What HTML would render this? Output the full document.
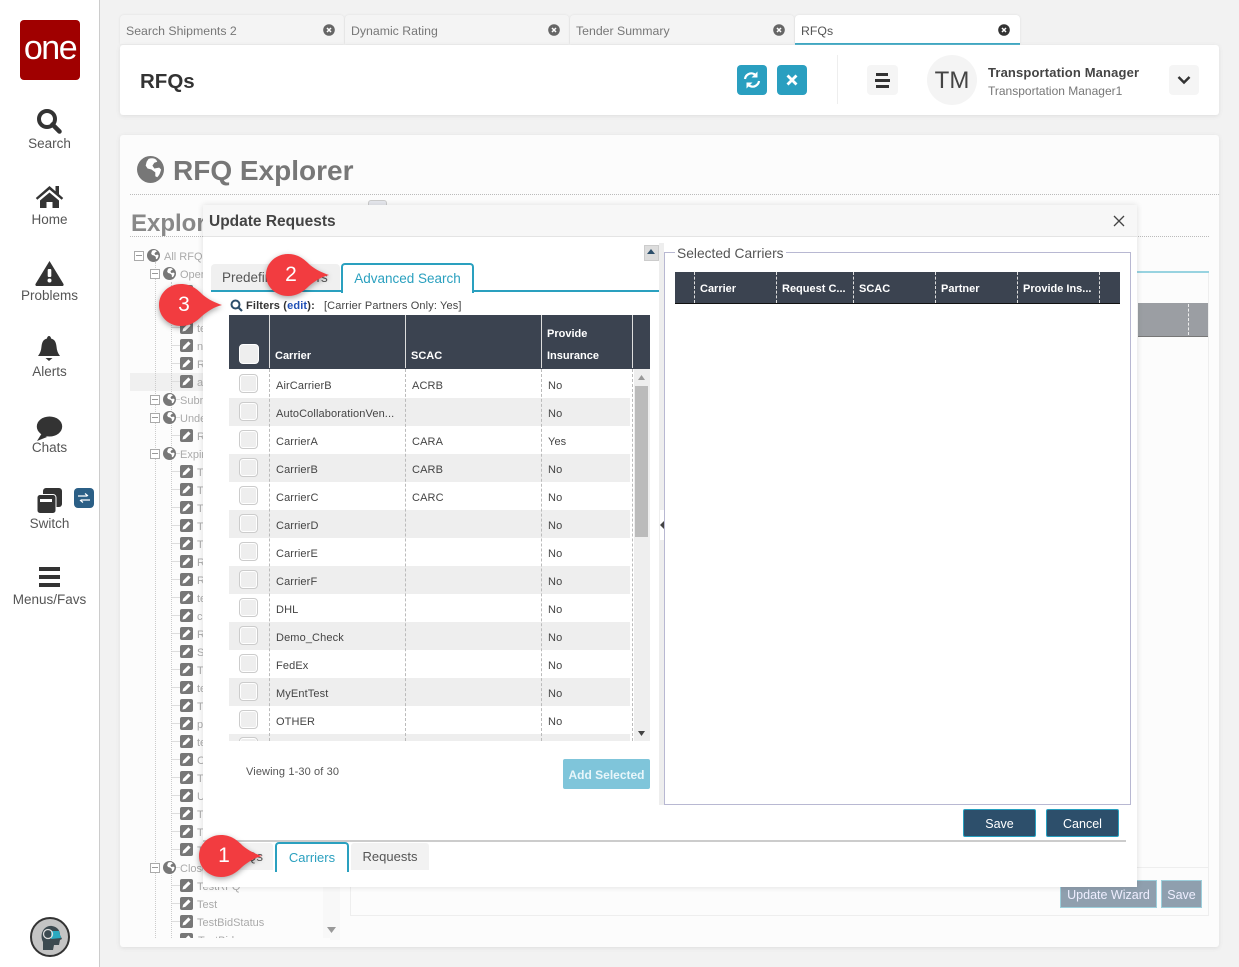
<!DOCTYPE html>
<html><head><meta charset="utf-8"><title>RFQs</title>
<style>
html,body{margin:0;padding:0;background:#f2f2f2}
#p{position:relative;width:1239px;height:967px;overflow:hidden;background:#f2f2f2;font-family:"Liberation Sans",sans-serif;color:#444}
#p div,#p svg{position:absolute}
.nav{left:0;width:99px;text-align:center;font-size:13.500px;color:#555;line-height:16px;margin-top:1px}
.tab{top:15px;height:29px;width:224px;background:#f4f4f4;border-radius:4px 4px 0 0;font-size:12.300px;line-height:33px;color:#777;text-indent:6px;box-shadow:0 0 2px #ddd}
.h{white-space:nowrap}
.tr{left:197px;font-size:11px;line-height:14px;color:#aaa;white-space:nowrap;margin-top:1px}
.g{width:13px;height:13px;left:163px}
.e{left:180px;width:13px;height:13px}
.m{left:150px;width:8px;height:8px;border:1px solid #aaa;background:#fff}
.m::after{content:"";position:absolute;left:1px;right:1px;top:3px;height:1px;background:#999}
.r{left:229px;width:401px;height:28px}
.o{background:#eee}
.cb{left:239px;width:17px;height:17px;border:1px solid #ccc;border-radius:4px;background:#eee;box-shadow:inset 0 0 0 1px #fff}
.c{font-size:11px;line-height:14px;color:#444;white-space:nowrap;margin-top:1px;letter-spacing:.12px}
.th{font-size:11px;font-weight:bold;color:#fff;line-height:14px;white-space:nowrap;margin-top:1px}
.dv{width:0;border-left:1px dashed #bbb}
.dw{width:0;border-left:1px dashed #ddd;top:272px;height:31px}
.btn{border:1px solid #27a0c0;background:#2d4f6b;color:#fff;font-size:12.500px;text-align:center;line-height:28px;border-radius:2px;top:809px;height:26px;width:71px}
</style></head><body><div id="p">

<svg width="0" height="0" style="left:0;top:0"><defs>
<symbol id="globe" viewBox="0 0 28 28"><circle cx="14" cy="14" r="14" fill="#777"/><path d="M12 3c3-1 6-1 8 1l1 2-3 1-2 3 2 3 5-1 2 2c-1 4-2 6-4 8l-2-1 0-4-4-3-4-1-2-3 1-4 2-3z" fill="#fff"/></symbol>
<symbol id="edit" viewBox="0 0 13 13"><rect width="13" height="13" rx="2" fill="#777"/><path d="M2.500 10.500l.6-2.800L8.400 2.400l2.200 2.200-5.300 5.300z" fill="#fff"/></symbol>
<symbol id="call" viewBox="-26 -24 68 48"><path d="M-2-21C8-21 14-16 20-10 26-5 33-2 39 0 31 2 25 6 19 11 13 17 7 21-2 21-14 21-24 12-24 0-24-12-14-21-2-21Z" fill="#f23c40"/></symbol>
</defs></svg>

<!-- sidebar -->
<div style="left:0;top:0;width:99px;height:967px;background:#fff;border-right:1px solid #ccc"></div>
<div style="left:20px;top:20px;width:60px;height:60px;background:#a00000;border-radius:4px;color:#fff;font-size:34px;line-height:57px;text-align:center;letter-spacing:-1.500px">one</div>
<svg style="left:36px;top:108px" width="26" height="26" viewBox="0 0 26 26"><circle cx="11" cy="11" r="8" fill="none" stroke="#333" stroke-width="4"/><path d="M16.500 16.500L23.500 23.500" stroke="#333" stroke-width="4.500" stroke-linecap="round"/></svg>
<div class="nav" style="top:135px">Search</div>
<svg style="left:35px;top:185px" width="29" height="24" viewBox="0 0 29 24"><path d="M14.500 1L0.800 13l1.500 1.800L14.500 4.500l12.200 10.300 1.500-1.800-4.200-3.700V1h-3.500v5.200z" fill="#333"/><path d="M5 15.500L14.500 7.500 24 15.500V23h-6.500v-6h-6v6H5z" fill="#333"/></svg>
<div class="nav" style="top:211px">Home</div>
<svg style="left:35px;top:260px" width="29" height="26" viewBox="0 0 29 26"><path d="M14.500 1L28.500 24c.4 1-.2 2-1 2H1.500c-.8 0-1.400-1-1-2z" fill="#333"/><rect x="12.700" y="9" width="3.600" height="8" rx="1" fill="#fff"/><circle cx="14.500" cy="20.500" r="2" fill="#fff"/></svg>
<div class="nav" style="top:287px">Problems</div>
<svg style="left:38px;top:336px" width="22" height="26" viewBox="0 0 22 26"><path d="M11 0c1 0 2 1 2 2.500 4 1 5 4 5.500 8 .3 4 1.500 7 3.500 9.500H0c2-2.500 3.200-5.500 3.500-9.500.5-4 1.500-7 5.500-8C9 1 10 0 11 0z" fill="#333"/><path d="M7.500 22h7L11 25z" fill="#333"/></svg>
<div class="nav" style="top:363px">Alerts</div>
<svg style="left:36px;top:416px" width="27" height="25" viewBox="0 0 27 25"><ellipse cx="13.500" cy="10.500" rx="12.700" ry="10" fill="#333"/><path d="M6 17L1 25l10-4z" fill="#333"/></svg>
<div class="nav" style="top:439px">Chats</div>
<svg style="left:37px;top:488px" width="26" height="26" viewBox="0 0 26 26"><rect x="6" y="0" width="19" height="19" rx="3" fill="#333"/><rect x="0" y="6.500" width="19" height="19" rx="3" fill="#333" stroke="#fff" stroke-width="1"/><rect x="3" y="11" width="12" height="3" fill="#fff"/></svg>
<div class="nav" style="top:515px">Switch</div>
<div style="left:74px;top:488px;width:20px;height:20px;background:#2b5f86;border-radius:4px"></div>
<svg style="left:78px;top:493px" width="12" height="10" viewBox="0 0 12 10"><path d="M0 3h9M7 .5L10 3M12 7H3M5 9.500L2 7" stroke="#fff" stroke-width="1.200" fill="none"/></svg>
<div style="left:39px;top:567px;width:21px;height:4px;background:#333"></div>
<div style="left:39px;top:575px;width:21px;height:4px;background:#333"></div>
<div style="left:39px;top:583px;width:21px;height:4px;background:#333"></div>
<div class="nav" style="top:591px">Menus/Favs</div>
<svg style="left:30px;top:917px" width="40" height="40" viewBox="0 0 40 40"><circle cx="20" cy="20" r="19" fill="#c4c4c4" stroke="#333" stroke-width="2"/><path d="M13 33l0-8c-4-8 1-17 9-16 6 1 8 5 8 9l2 4-2 1-1 5-5 0-1 5z" fill="#3c4a50"/><path d="M21 14h8l2 7-10 1z" fill="#2aa9c0"/><circle cx="18" cy="17" r="4.500" fill="none" stroke="#ddd" stroke-width="1.300"/></svg>

<!-- tabs -->
<div class="tab h" style="left:120px">Search Shipments 2</div>
<div class="tab h" style="left:345px">Dynamic Rating</div>
<div class="tab h" style="left:570px">Tender Summary</div>
<div class="tab h" style="left:795px;width:225px;background:#fff;height:28px;border-bottom:2px solid #2aa0bf;color:#555">RFQs</div>
<svg style="left:323px;top:24px" width="12" height="12" viewBox="0 0 12 12"><circle cx="6" cy="6" r="5.800" fill="#666"/><path d="M4 4l4 4M8 4l-4 4" stroke="#fff" stroke-width="1.500"/></svg>
<svg style="left:548px;top:24px" width="12" height="12" viewBox="0 0 12 12"><circle cx="6" cy="6" r="5.800" fill="#666"/><path d="M4 4l4 4M8 4l-4 4" stroke="#fff" stroke-width="1.500"/></svg>
<svg style="left:773px;top:24px" width="12" height="12" viewBox="0 0 12 12"><circle cx="6" cy="6" r="5.800" fill="#666"/><path d="M4 4l4 4M8 4l-4 4" stroke="#fff" stroke-width="1.500"/></svg>
<svg style="left:998px;top:24px" width="12" height="12" viewBox="0 0 12 12"><circle cx="6" cy="6" r="5.800" fill="#333"/><path d="M4 4l4 4M8 4l-4 4" stroke="#fff" stroke-width="1.500"/></svg>

<!-- header card -->
<div style="left:120px;top:45px;width:1099px;height:70px;background:#fff;border-radius:3px;box-shadow:0 1px 4px #ddd"></div>
<div class="h" style="left:140px;top:68px;font-size:20.500px;line-height:28px;font-weight:bold;color:#333">RFQs</div>
<div style="left:737px;top:65px;width:30px;height:30px;background:#2a9fc0;border-radius:4px"></div>
<svg style="left:742px;top:71px" width="20" height="18" viewBox="0 0 20 18"><path d="M3 8c.5-4 5-7 9-5l2 1.500M17 10c-.5 4-5 7-9 5l-2-1.500" fill="none" stroke="#fff" stroke-width="2.200"/><path d="M15.500 0.500v6h-6zM4.500 17.500v-6h6z" fill="#fff"/></svg>
<div style="left:777px;top:65px;width:30px;height:30px;background:#2a9fc0;border-radius:4px"></div>
<svg style="left:786px;top:74px" width="12" height="12" viewBox="0 0 12 12"><path d="M1.500 1.500l9 9M10.500 1.500l-9 9" stroke="#fff" stroke-width="2.800"/></svg>
<div style="left:837px;top:55px;width:1px;height:49px;background:#eee"></div>
<div style="left:867px;top:65px;width:31px;height:30px;background:#f5f5f5;border-radius:4px"></div>
<div style="left:876px;top:73px;width:12px;height:3px;background:#333"></div>
<div style="left:875px;top:79px;width:15px;height:3px;background:#333"></div>
<div style="left:876px;top:85px;width:13px;height:3px;background:#333"></div>
<div style="left:927px;top:55px;width:50px;height:50px;border-radius:25px;background:#f4f4f4;color:#444;font-size:24px;line-height:52px;text-align:center">TM</div>
<div class="h" style="left:988px;top:65px;font-size:13px;line-height:16px;font-weight:bold;color:#444;letter-spacing:.14px">Transportation Manager</div>
<div class="h" style="left:988px;top:84px;font-size:12px;line-height:15px;color:#777">Transportation Manager1</div>
<div style="left:1169px;top:65px;width:30px;height:30px;background:#f5f5f5;border-radius:4px"></div>
<svg style="left:1177px;top:75px" width="14" height="10" viewBox="0 0 14 10"><path d="M1.500 2L7 7.500 12.500 2" fill="none" stroke="#333" stroke-width="2.500"/></svg>

<!-- main card -->
<div style="left:120px;top:135px;width:1099px;height:812px;background:#fcfcfc;border-radius:3px;box-shadow:0 1px 4px #ddd"></div>
<svg style="left:137px;top:156px" width="27" height="27"><use href="#globe"/></svg>
<div class="h" style="left:173px;top:153px;font-size:28px;line-height:36px;font-weight:bold;color:#777">RFQ Explorer</div>
<div style="left:130px;top:194px;width:1089px;border-top:1px dotted #bbb"></div>
<div style="left:368px;top:200px;width:17px;height:6px;background:#e6e8ee;border:1px solid #ccc;border-radius:3px 3px 0 0"></div>
<div class="h" style="left:131px;top:209px;font-size:24px;line-height:30px;font-weight:bold;color:#888">Explorer</div>
<div style="left:130px;top:236px;width:1079px;border-top:1px dotted #bbb"></div>
<div style="left:1137px;top:271px;width:72px;height:2px;background:#98d3e0"></div>
<div style="left:1138px;top:303px;width:70px;height:33px;background:#9b9ea3;border-bottom:1px solid #777"></div>
<div style="left:1188px;top:304px;height:31px;width:0;border-left:1px dashed #eee"></div>
<div style="left:1208px;top:273px;width:1px;height:642px;background:#eee"></div>
<div style="left:350px;top:867px;width:859px;height:1px;background:#eee"></div>
<div style="left:350px;top:915px;width:859px;height:1px;background:#eee"></div>
<div style="left:350px;top:860px;width:1px;height:55px;background:#eee"></div>
<div style="left:1060px;top:880px;width:95px;height:26px;background:#8f9fae;border:1px solid #9ccfdc;color:#eef;font-size:12.500px;line-height:28px;text-align:center">Update Wizard</div>
<div style="left:1161px;top:880px;width:39px;height:26px;background:#8f9fae;border:1px solid #9ccfdc;color:#eef;font-size:12.500px;line-height:28px;text-align:center">Save</div>

<!-- tree -->
<div style="left:130px;top:373px;width:80px;height:18px;background:#f0f0f0"></div>
<div style="left:323px;top:245px;width:17px;height:695px;background:#f8f8f8"></div>
<svg style="left:327px;top:927px" width="9" height="6"><path d="M0 0h9L4.500 6z" fill="#999"/></svg>
<div style="left:155px;top:262px;height:676px;border-left:1px dotted #ccc"></div>
<div style="left:171px;top:282px;height:656px;border-left:1px dotted #ccc"></div>
<div style="left:172px;top:291px;width:8px;height:647px;background-image:repeating-linear-gradient(#ddd 0 1px,transparent 1px 18px)"></div>
<div class="m" style="left:134px;top:251px"></div><svg class="g" style="left:147px;top:249px"><use href="#globe"/></svg><div class="tr" style="left:164px;top:249px">All RFQs</div>
<div class="m" style="top:269px"></div><svg class="g" style="top:267px"><use href="#globe"/></svg><div class="tr" style="left:180px;top:267px">Open</div>
<div class="m" style="top:395px"></div><svg class="g" style="top:393px"><use href="#globe"/></svg><div class="tr" style="left:180px;top:393px">Submitted</div>
<div class="m" style="top:413px"></div><svg class="g" style="top:411px"><use href="#globe"/></svg><div class="tr" style="left:180px;top:411px">Under</div>
<div class="m" style="top:449px"></div><svg class="g" style="top:447px"><use href="#globe"/></svg><div class="tr" style="left:180px;top:447px">Expired</div>
<div class="m" style="top:863px"></div><svg class="g" style="top:861px"><use href="#globe"/></svg><div class="tr" style="left:180px;top:861px">Closed</div>
<svg class="e" style="top:285px"><use href="#edit"/></svg><svg class="e" style="top:303px"><use href="#edit"/></svg><svg class="e" style="top:321px"><use href="#edit"/></svg><svg class="e" style="top:339px"><use href="#edit"/></svg><svg class="e" style="top:357px"><use href="#edit"/></svg><svg class="e" style="top:375px"><use href="#edit"/></svg><svg class="e" style="top:429px"><use href="#edit"/></svg>
<svg class="e" style="top:465px"><use href="#edit"/></svg><svg class="e" style="top:483px"><use href="#edit"/></svg><svg class="e" style="top:501px"><use href="#edit"/></svg><svg class="e" style="top:519px"><use href="#edit"/></svg><svg class="e" style="top:537px"><use href="#edit"/></svg><svg class="e" style="top:555px"><use href="#edit"/></svg><svg class="e" style="top:573px"><use href="#edit"/></svg><svg class="e" style="top:591px"><use href="#edit"/></svg><svg class="e" style="top:609px"><use href="#edit"/></svg><svg class="e" style="top:627px"><use href="#edit"/></svg><svg class="e" style="top:645px"><use href="#edit"/></svg><svg class="e" style="top:663px"><use href="#edit"/></svg><svg class="e" style="top:681px"><use href="#edit"/></svg><svg class="e" style="top:699px"><use href="#edit"/></svg><svg class="e" style="top:717px"><use href="#edit"/></svg><svg class="e" style="top:735px"><use href="#edit"/></svg><svg class="e" style="top:753px"><use href="#edit"/></svg><svg class="e" style="top:771px"><use href="#edit"/></svg><svg class="e" style="top:789px"><use href="#edit"/></svg><svg class="e" style="top:807px"><use href="#edit"/></svg><svg class="e" style="top:825px"><use href="#edit"/></svg><svg class="e" style="top:843px"><use href="#edit"/></svg>
<svg class="e" style="top:879px"><use href="#edit"/></svg><svg class="e" style="top:897px"><use href="#edit"/></svg><svg class="e" style="top:915px"><use href="#edit"/></svg>
<div class="tr" style="top:321px">test</div><div class="tr" style="top:339px">new</div><div class="tr" style="top:357px">RFQ</div><div class="tr" style="top:375px">abc</div><div class="tr" style="top:429px">RFQ</div>
<div class="tr" style="top:465px">Test</div><div class="tr" style="top:483px">Test</div><div class="tr" style="top:501px">Test</div><div class="tr" style="top:519px">Test</div><div class="tr" style="top:537px">Test</div><div class="tr" style="top:555px">RFQ</div><div class="tr" style="top:573px">RFQ</div><div class="tr" style="top:591px">test</div><div class="tr" style="top:609px">copy</div><div class="tr" style="top:627px">RFQ</div><div class="tr" style="top:645px">Ship</div><div class="tr" style="top:663px">Test</div><div class="tr" style="top:681px">test</div><div class="tr" style="top:699px">Test</div><div class="tr" style="top:717px">part</div><div class="tr" style="top:735px">test</div><div class="tr" style="top:753px">Copy</div><div class="tr" style="top:771px">Test</div><div class="tr" style="top:789px">Upd</div><div class="tr" style="top:807px">Test</div><div class="tr" style="top:825px">Test</div><div class="tr" style="top:843px">Test</div>
<div class="tr" style="top:879px">TestRFQ</div><div class="tr" style="top:897px">Test</div><div class="tr" style="top:915px">TestBidStatus</div>
<div style="left:175px;top:933px;width:148px;height:5px;overflow:hidden"><svg class="e" style="left:5px;top:0"><use href="#edit"/></svg><div class="tr" style="left:23px;top:0">TestBid</div></div>
<div style="left:130px;top:938px;width:200px;height:9px;background:#fcfcfc"></div>

<!-- modal -->
<div style="left:203px;top:205px;width:934px;height:682px;background:#fff;box-shadow:0 0 6px rgba(0,0,0,.12)"></div>
<div style="left:203px;top:205px;width:934px;height:31px;background:#f7f7f7;border-bottom:1px solid #e4e4e4"></div>
<div class="h" style="left:209px;top:213px;font-size:15.500px;line-height:18px;font-weight:bold;color:#444">Update Requests</div>
<svg style="left:1113px;top:215px" width="12" height="12" viewBox="0 0 12 12"><path d="M1 1l10 10M11 1L1 11" stroke="#444" stroke-width="1.300"/></svg>

<div style="left:211px;top:264px;width:129px;height:27px;background:#f0f0f0;border-radius:4px 4px 0 0;color:#555;font-size:13.500px;line-height:27px;text-indent:11px;white-space:nowrap">Predefined Filters</div>
<div style="left:341px;top:263px;width:129px;height:28px;background:#fff;border:2px solid #2aa0bf;border-bottom:0;border-radius:4px 4px 0 0;color:#2aa0bf;font-size:13.500px;line-height:27px;text-align:center;white-space:nowrap">Advanced Search</div>
<div style="left:211px;top:290px;width:130px;height:2px;background:#2aa0bf"></div>
<div style="left:472px;top:290px;width:187px;height:2px;background:#2aa0bf"></div>
<svg style="left:230px;top:299px" width="13" height="13" viewBox="0 0 13 13"><circle cx="5.500" cy="5.500" r="4" fill="none" stroke="#2d4f6b" stroke-width="2"/><path d="M8.500 8.500l3.500 3.500" stroke="#2d4f6b" stroke-width="2.200"/></svg>
<div class="h" style="left:246px;top:299px;font-size:11px;line-height:14px;font-weight:bold;color:#333;letter-spacing:.15px">Filters (<span style="color:#1f4fb5">edit</span>):</div>
<div class="h" style="left:324px;top:299px;font-size:11px;line-height:14px;color:#444;letter-spacing:.13px">[Carrier Partners Only: Yes]</div>

<!-- left table -->
<div style="left:229px;top:315px;width:421px;height:54px;background:#3b4350"></div>
<div style="left:269px;top:315px;width:1px;height:53px;background:#ddd"></div>
<div style="left:405px;top:315px;width:1px;height:53px;background:#ddd"></div>
<div style="left:541px;top:315px;width:1px;height:53px;background:#ddd"></div>
<div style="left:632px;top:315px;width:1px;height:53px;background:#ddd"></div>
<div style="left:239px;top:344px;width:18px;height:18px;background:#eee;border:1px solid #fff;border-radius:4px"></div>
<div class="th" style="left:275px;top:348px">Carrier</div>
<div class="th" style="left:411px;top:348px">SCAC</div>
<div class="th" style="left:547px;top:326px">Provide</div>
<div class="th" style="left:547px;top:348px">Insurance</div>

<div class="r o" style="top:398px"></div><div class="r o" style="top:454px"></div><div class="r o" style="top:510px"></div><div class="r o" style="top:566px"></div><div class="r o" style="top:622px"></div><div class="r o" style="top:678px"></div><div class="r o" style="top:734px;height:7px"></div>
<div class="dv" style="left:269px;top:369px;height:372px"></div><div class="dv" style="left:405px;top:369px;height:372px"></div><div class="dv" style="left:541px;top:369px;height:372px"></div><div class="dv" style="left:632px;top:369px;height:372px"></div>
<div style="left:634px;top:369px;width:16px;height:372px;background:#eee"></div>
<div style="left:635px;top:386px;width:13px;height:151px;background:#bbb"></div>
<svg style="left:638px;top:375px" width="7" height="5"><path d="M0 5h7L3.500 0z" fill="#999"/></svg>
<svg style="left:638px;top:731px" width="7" height="5"><path d="M0 0h7L3.500 5z" fill="#444"/></svg>

<div class="cb" style="top:374px"></div><div class="c" style="left:276px;top:378px">AirCarrierB</div><div class="c" style="left:412px;top:378px">ACRB</div><div class="c" style="left:548px;top:378px">No</div>
<div class="cb" style="top:402px"></div><div class="c" style="left:276px;top:406px">AutoCollaborationVen...</div><div class="c" style="left:548px;top:406px">No</div>
<div class="cb" style="top:430px"></div><div class="c" style="left:276px;top:434px">CarrierA</div><div class="c" style="left:412px;top:434px">CARA</div><div class="c" style="left:548px;top:434px">Yes</div>
<div class="cb" style="top:458px"></div><div class="c" style="left:276px;top:462px">CarrierB</div><div class="c" style="left:412px;top:462px">CARB</div><div class="c" style="left:548px;top:462px">No</div>
<div class="cb" style="top:486px"></div><div class="c" style="left:276px;top:490px">CarrierC</div><div class="c" style="left:412px;top:490px">CARC</div><div class="c" style="left:548px;top:490px">No</div>
<div class="cb" style="top:514px"></div><div class="c" style="left:276px;top:518px">CarrierD</div><div class="c" style="left:548px;top:518px">No</div>
<div class="cb" style="top:542px"></div><div class="c" style="left:276px;top:546px">CarrierE</div><div class="c" style="left:548px;top:546px">No</div>
<div class="cb" style="top:570px"></div><div class="c" style="left:276px;top:574px">CarrierF</div><div class="c" style="left:548px;top:574px">No</div>
<div class="cb" style="top:598px"></div><div class="c" style="left:276px;top:602px">DHL</div><div class="c" style="left:548px;top:602px">No</div>
<div class="cb" style="top:626px"></div><div class="c" style="left:276px;top:630px">Demo_Check</div><div class="c" style="left:548px;top:630px">No</div>
<div class="cb" style="top:654px"></div><div class="c" style="left:276px;top:658px">FedEx</div><div class="c" style="left:548px;top:658px">No</div>
<div class="cb" style="top:682px"></div><div class="c" style="left:276px;top:686px">MyEntTest</div><div class="c" style="left:548px;top:686px">No</div>
<div class="cb" style="top:710px"></div><div class="c" style="left:276px;top:714px">OTHER</div><div class="c" style="left:548px;top:714px">No</div>
<div style="left:238px;top:737px;width:22px;height:4px;overflow:hidden"><div class="cb" style="left:1px;top:0"></div></div>
<div style="left:229px;top:741px;width:425px;height:10px;background:#fff"></div>

<div class="c" style="left:246px;top:764px;color:#555">Viewing 1-30 of 30</div>
<div style="left:563px;top:759px;width:87px;height:30px;background:#7fc5da;border-radius:2px;color:#e8f6fa;font-size:12px;font-weight:bold;line-height:32px;text-align:center">Add Selected</div>

<!-- splitter & right -->
<div style="left:659px;top:243px;width:5px;height:562px;background:#eee"></div>
<div style="left:644px;top:245px;width:13px;height:14px;background:#ddd;border:1px solid #ccc"></div>
<svg style="left:647px;top:249px" width="8" height="5"><path d="M0 5h8L4 0z" fill="#2d4f6b"/></svg>
<svg style="left:660px;top:510px" width="4" height="30" viewBox="0 0 4 30"><rect width="4" height="30" fill="#fff"/><path d="M4 11v8L0 15z" fill="#444"/></svg>
<div style="left:664px;top:252px;width:465px;height:551px;border:1px solid #b8b8d2;background:#fff"></div>
<div class="h" style="left:675px;top:246px;background:#fff;padding:0 2px;font-size:13.800px;line-height:16px;color:#555">Selected Carriers</div>
<div style="left:675px;top:272px;width:445px;height:31px;background:#3b4350;border-bottom:1px solid #111"></div>
<div class="dw" style="left:694px"></div><div class="dw" style="left:776px"></div><div class="dw" style="left:853px"></div><div class="dw" style="left:935px"></div><div class="dw" style="left:1017px"></div><div class="dw" style="left:1099px"></div>
<div class="th" style="left:700px;top:281px">Carrier</div>
<div class="th" style="left:782px;top:281px">Request C...</div>
<div class="th" style="left:859px;top:281px">SCAC</div>
<div class="th" style="left:941px;top:281px">Partner</div>
<div class="th" style="left:1023px;top:281px">Provide Ins...</div>

<div class="btn" style="left:963px">Save</div>
<div class="btn" style="left:1046px">Cancel</div>

<!-- bottom tabs -->
<div style="left:203px;top:840px;width:923px;height:2px;background:#ccc"></div>
<div style="left:210px;top:843px;width:63px;height:27px;background:#f2f2f2;border-radius:3px 3px 0 0;color:#555;font-size:13px;line-height:27px;text-align:right;padding-right:10px;box-sizing:border-box">RFQs</div>
<div style="left:275px;top:842px;width:70px;height:28px;background:#fff;border:2px solid #2aa0bf;border-bottom:0;border-radius:4px 4px 0 0;color:#2aa0bf;font-size:13px;line-height:27px;text-align:center">Carriers</div>
<div style="left:351px;top:843px;width:78px;height:27px;background:#f2f2f2;border-radius:3px 3px 0 0;color:#555;font-size:13px;line-height:27px;text-align:center">Requests</div>

<!-- callouts -->
<svg style="left:197px;top:832px;filter:drop-shadow(0 2px 3px rgba(0,0,0,.35))" width="68" height="48"><use href="#call"/></svg>
<div style="left:203px;top:843px;width:42px;font-size:21px;line-height:26px;color:#fff;text-align:center">1</div>
<svg style="left:264px;top:251px;filter:drop-shadow(0 2px 3px rgba(0,0,0,.35))" width="68" height="48"><use href="#call"/></svg>
<div style="left:270px;top:262px;width:42px;font-size:21px;line-height:26px;color:#fff;text-align:center">2</div>
<svg style="left:157px;top:281px;filter:drop-shadow(0 2px 3px rgba(0,0,0,.35))" width="68" height="48"><use href="#call"/></svg>
<div style="left:163px;top:292px;width:42px;font-size:21px;line-height:26px;color:#fff;text-align:center">3</div>

</div></body></html>
